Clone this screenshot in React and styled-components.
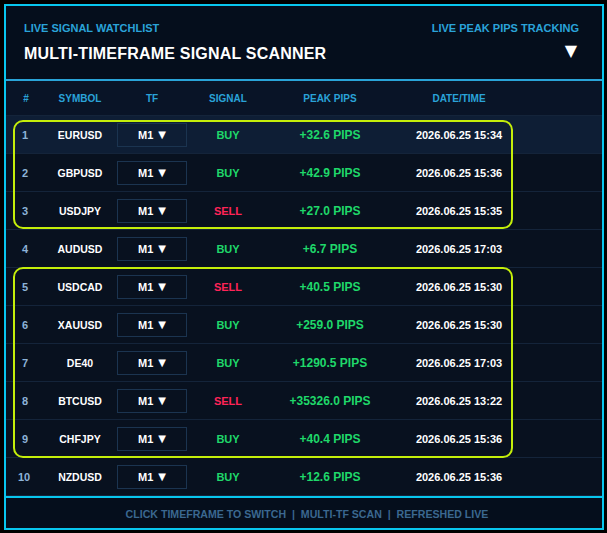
import React from "react";
import styled, { createGlobalStyle } from "styled-components";

const Global = createGlobalStyle`
  html, body { margin: 0; padding: 0; background: #000; }
  body { font-family: "Liberation Sans", Arial, sans-serif; }
  * { box-sizing: border-box; }
`;

const Page = styled.div`
  padding: 4px;
  width: 607px;
  height: 533px;
  background: #000;
`;

const Panel = styled.div`
  width: 600px;
  height: 526px;
  border: 2px solid #08c6ee;
  background: #07101d;
  display: flex;
  flex-direction: column;
`;

const Header = styled.div`
  height: 75px;
  border-bottom: 2px solid #2aa4d8;
  background: #050e1c;
  padding: 16px 23px 0 18px;
  display: flex;
  justify-content: space-between;
`;

const HeaderCol = styled.div`
  display: flex;
  flex-direction: column;
  align-items: ${(p) => (p.$right ? "flex-end" : "flex-start")};
  gap: ${(p) => (p.$right ? "7px" : "9px")};
`;

const Label = styled.div`
  font-size: 11px;
  font-weight: bold;
  color: #2aa3d9;
  line-height: 13px;
`;

const Title = styled.div`
  font-size: 16px;
  font-weight: bold;
  color: #ffffff;
  line-height: 20px;
  letter-spacing: 0.2px;
`;

const Caret = styled.div`
  font-family: "DejaVu Sans", sans-serif;
  font-size: 16px;
  color: #ffffff;
  line-height: 18px;
  margin-right: 2px;
`;

const Grid = styled.div`
  display: grid;
  grid-template-columns: 40px 68px 76px 76px 128px 130px 1fr;
  align-items: center;
`;

const HeadRow = styled(Grid)`
  height: 35px;
  background: #091427;
  border-bottom: 1px solid #14243a;
`;

const HeadCell = styled.div`
  text-align: center;
  font-size: 10px;
  font-weight: bold;
  color: #2aa3d9;
`;

const Body = styled.div`
  position: relative;
  flex: 1;
`;

const Row = styled(Grid)`
  height: 38px;
  border-bottom: 1px solid #14243a;
  background: ${(p) => (p.$active ? "#0e1e35" : "#08111f")};
`;

const Cell = styled.div`
  text-align: center;
  font-weight: bold;
  font-size: ${(p) => p.$size || 11}px;
  color: ${(p) => p.$color || "#ffffff"};
  white-space: nowrap;
`;

const NumCell = styled(Cell)`
  color: #8db3d8;
  text-align: left;
  padding-left: ${(p) => (p.$wide ? 12 : 16)}px;
  font-size: 11px;
`;

const TfBox = styled.div`
  justify-self: center;
  width: 70px;
  height: 24px;
  border: 1px solid #1b3450;
  display: flex;
  align-items: center;
  justify-content: center;
  gap: 5px;
  font-size: 11px;
  font-weight: bold;
  color: #ffffff;
`;

const TfArrow = styled.span`
  font-family: "DejaVu Sans", sans-serif;
  font-size: 10px;
`;

const Group = styled.div`
  position: absolute;
  left: 7px;
  width: 500px;
  border: 2px solid #c4ee0a;
  border-radius: 10px;
  pointer-events: none;
`;

const Footer = styled.div`
  height: 32px;
  border-top: 2px solid #08c6ee;
  background: #050e1c;
  display: flex;
  align-items: center;
  justify-content: center;
  font-size: 10.6px;
  font-weight: bold;
  color: #3b6890;
  padding-left: 6px;
  padding-top: 1px;
  white-space: pre;
`;

const GREEN = "#1fd86a";
const RED = "#ff2458";

const rows = [
  ["EURUSD", "BUY", "+32.6 PIPS", "2026.06.25 15:34"],
  ["GBPUSD", "BUY", "+42.9 PIPS", "2026.06.25 15:36"],
  ["USDJPY", "SELL", "+27.0 PIPS", "2026.06.25 15:35"],
  ["AUDUSD", "BUY", "+6.7 PIPS", "2026.06.25 17:03"],
  ["USDCAD", "SELL", "+40.5 PIPS", "2026.06.25 15:30"],
  ["XAUUSD", "BUY", "+259.0 PIPS", "2026.06.25 15:30"],
  ["DE40", "BUY", "+1290.5 PIPS", "2026.06.25 17:03"],
  ["BTCUSD", "SELL", "+35326.0 PIPS", "2026.06.25 13:22"],
  ["CHFJPY", "BUY", "+40.4 PIPS", "2026.06.25 15:36"],
  ["NZDUSD", "BUY", "+12.6 PIPS", "2026.06.25 15:36"],
];

export default function App() {
  return (
    <Page>
      <Global />
      <Panel>
        <Header>
          <HeaderCol>
            <Label>LIVE SIGNAL WATCHLIST</Label>
            <Title>MULTI-TIMEFRAME SIGNAL SCANNER</Title>
          </HeaderCol>
          <HeaderCol $right>
            <Label>LIVE PEAK PIPS TRACKING</Label>
            <Caret>▼</Caret>
          </HeaderCol>
        </Header>
        <HeadRow>
          <HeadCell>#</HeadCell>
          <HeadCell>SYMBOL</HeadCell>
          <HeadCell>TF</HeadCell>
          <HeadCell>SIGNAL</HeadCell>
          <HeadCell>PEAK PIPS</HeadCell>
          <HeadCell>DATE/TIME</HeadCell>
          <div />
        </HeadRow>
        <Body>
          {rows.map(([sym, sig, pips, dt], i) => (
            <Row key={sym} $active={i === 0}>
              <NumCell $wide={i === 9}>{i + 1}</NumCell>
              <Cell $size={10.5}>{sym}</Cell>
              <TfBox>
                M1 <TfArrow>▼</TfArrow>
              </TfBox>
              <Cell $size={11} $color={sig === "BUY" ? GREEN : RED}>
                {sig}
              </Cell>
              <Cell $size={12} $color={GREEN}>
                {pips}
              </Cell>
              <Cell $size={11}>{dt}</Cell>
              <div />
            </Row>
          ))}
          <Group style={{ top: 4, height: 109 }} />
          <Group style={{ top: 151, height: 191 }} />
        </Body>
        <Footer>{"CLICK TIMEFRAME TO SWITCH  |  MULTI-TF SCAN  |  REFRESHED LIVE"}</Footer>
      </Panel>
    </Page>
  );
}
